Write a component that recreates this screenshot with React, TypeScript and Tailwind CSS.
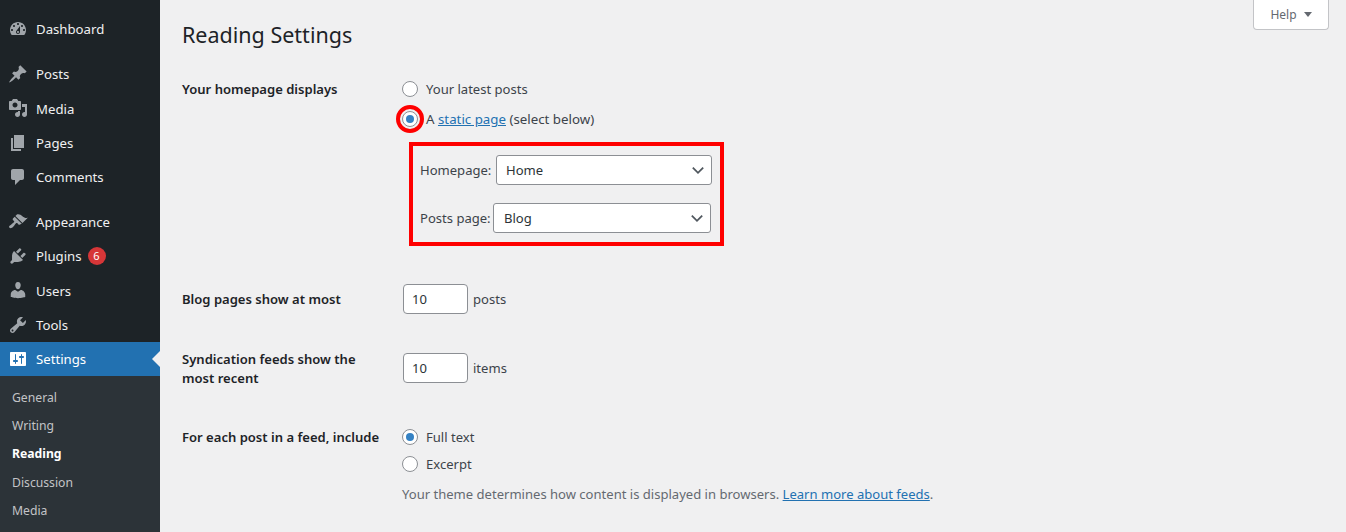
import React from 'react';

const paths = {
  dashboard: 'M3.76 16h12.48c1.1-1.37 1.76-3.11 1.76-5 0-4.42-3.58-8-8-8s-8 3.58-8 8c0 1.89.66 3.63 1.76 5zM10 4c.55 0 1 .45 1 1s-.45 1-1 1-1-.45-1-1 .45-1 1-1zM6 6c.55 0 1 .45 1 1s-.45 1-1 1-1-.45-1-1 .45-1 1-1zm8 0c.55 0 1 .45 1 1s-.45 1-1 1-1-.45-1-1 .45-1 1-1zm-5.37 5.55L12 7v6c0 1.1-.9 2-2 2s-2-.9-2-2c0-.57.24-1.08.63-1.45zM4 10c.55 0 1 .45 1 1s-.45 1-1 1-1-.45-1-1 .45-1 1-1zm12 0c.55 0 1 .45 1 1s-.45 1-1 1-1-.45-1-1 .45-1 1-1zm-5 3c0-.55-.45-1-1-1s-1 .45-1 1 .45 1 1 1 1-.45 1-1z',
  posts: 'M10.44 3.02l1.82-1.82 6.36 6.35-1.83 1.82c-1.05-.68-2.48-.57-3.41.36l-.75.75c-.92.93-1.04 2.35-.35 3.41l-1.83 1.82-2.41-2.41-2.8 2.79c-.42.42-3.38 2.71-3.8 2.29s1.86-3.39 2.28-3.81l2.79-2.79L4.1 9.36l1.83-1.82c1.05.69 2.48.57 3.4-.36l.75-.75c.93-.92 1.05-2.35.36-3.41z',
  media: 'M13 11V4c0-.55-.45-1-1-1h-1.67L9 1H5L3.67 3H2c-.55 0-1 .45-1 1v7c0 .55.45 1 1 1h10c.55 0 1-.45 1-1zM7 4.5c1.38 0 2.5 1.12 2.5 2.5S8.38 9.5 7 9.5 4.5 8.38 4.5 7 5.62 4.5 7 4.5zM14 6h5v10.5c0 1.38-1.12 2.5-2.5 2.5S14 17.88 14 16.5s1.12-2.5 2.5-2.5c.17 0 .34.02.5.05V9h-3V6zm-4 8.05V13h2v3.5c0 1.38-1.12 2.5-2.5 2.5S7 17.88 7 16.5 8.12 14 9.5 14c.17 0 .34.02.5.05z',
  pages: 'M6 15V2h10v13H6zm-1 1h8v2H3V5h2v11z',
  comments: 'M5 2h9c1.1 0 2 .9 2 2v7c0 1.1-.9 2-2 2h-2l-5 5v-5H5c-1.1 0-2-.9-2-2V4c0-1.1.9-2 2-2z',
  appearance: 'M14.48 11.06L7.41 3.99l1.5-1.5c.5-.56 2.3-.47 3.51.32 1.21.8 1.43 1.28 2.91 2.1 1.18.64 2.45 1.26 4.45.85zm-.71.71L6.7 4.7 4.93 6.47c-.39.39-.39 1.02 0 1.41l1.06 1.06c.39.39.39 1.03 0 1.42-.6.6-1.43 1.11-2.21 1.69-.35.26-.7.53-1.01.84C1.43 13.23.4 14.75 1.5 15.85c1.09 1.09 2.61.06 3.96-1.3.31-.31.58-.66.85-1.02.57-.78 1.08-1.61 1.69-2.21.39-.39 1.02-.39 1.41 0l1.06 1.06c.39.39 1.02.39 1.41 0z',
  plugins: 'M13.11 4.36L9.87 7.6 8 5.73l3.24-3.24c.35-.34 1.05-.2 1.56.32.52.51.66 1.21.31 1.55zm-8 1.77l.91-1.12 9.01 9.01-1.19.84c-.71.71-2.63 1.16-3.82 1.16H6.14L4.9 17.26c-.59.59-1.54.59-2.12 0-.59-.58-.59-1.53 0-2.12l1.24-1.24v-3.88c0-1.13.4-3.19 1.09-3.89zm7.26 3.97l3.24-3.24c.34-.35 1.04-.21 1.55.31.52.51.66 1.21.31 1.55l-3.24 3.25z',
  users: 'M10 9.25c-2.27 0-2.73-3.44-2.73-3.44C7 4.02 7.82 2 9.97 2c2.16 0 2.98 2.02 2.71 3.81 0 0-.41 3.44-2.68 3.44zm0 2.57L12.72 10c2.39 0 4.52 2.33 4.52 4.53v2.49s-3.65 1.13-7.24 1.13c-3.65 0-7.24-1.13-7.24-1.13v-2.49c0-2.25 1.94-4.48 4.47-4.48z',
  tools: 'M16.68 9.77c-1.34 1.34-3.3 1.67-4.95.99l-5.41 6.52c-.99.99-2.59.99-3.58 0s-.99-2.59 0-3.57l6.52-5.42c-.68-1.65-.35-3.61.99-4.95 1.28-1.28 3.12-1.62 4.72-1.06l-2.89 2.89 2.82 2.82 2.86-2.87c.53 1.58.18 3.39-1.08 4.65zM3.81 16.21c.4.39 1.04.39 1.43 0 .4-.4.4-1.04 0-1.43-.39-.4-1.03-.4-1.43 0-.39.39-.39 1.03 0 1.43z',
  settings: 'M18 16V4c0-.55-.45-1-1-1H3c-.55 0-1 .45-1 1v12c0 .55.45 1 1 1h14c.55 0 1-.45 1-1zM8 11h1c.55 0 1 .45 1 1s-.45 1-1 1H8v1.5c0 .28-.22.5-.5.5s-.5-.22-.5-.5V13H6c-.55 0-1-.45-1-1s.45-1 1-1h1V5.5c0-.28.22-.5.5-.5s.5.22.5.5V11zm5-2h-1c-.55 0-1-.45-1-1s.45-1 1-1h1V5.5c0-.28.22-.5.5-.5s.5.22.5.5V7h1c.55 0 1 .45 1 1s-.45 1-1 1h-1v5.5c0 .28-.22.5-.5.5s-.5-.22-.5-.5V9z',
};

type IconName = keyof typeof paths;

const MenuItem: React.FC<{ icon: IconName; label: string; children?: React.ReactNode }> = ({ icon, label, children }) => (
  <div className="flex items-center h-[34.2px] pl-[8px] text-[#f0f0f1]">
    <svg viewBox="0 0 20 20" className="w-5 h-5 mr-2 fill-[#a0a5aa]">
      <path d={paths[icon]} />
    </svg>
    <span className="pt-[2px]">{label}</span>
    {children}
  </div>
);

const Radio: React.FC<{ checked?: boolean }> = ({ checked }) => (
  <span className="flex items-center justify-center w-4 h-4 rounded-full border border-[#8c8f94] bg-white shrink-0">
    {checked && <span className="w-2 h-2 rounded-full bg-[#3582c4]" />}
  </span>
);

const Select: React.FC<{ value: string; className: string }> = ({ value, className }) => (
  <div className={`flex items-center justify-between h-[30px] pr-[5px] bg-white border border-[#8c8f94] rounded-[3px] text-[#2c3338] ${className}`}>
    <span className="pt-[2px]">{value}</span>
    <svg viewBox="0 0 20 20" className="w-4 h-4 fill-none stroke-[#50575e] stroke-[2.2]">
      <path d="M3.5 7l6.5 6.5L16.5 7" />
    </svg>
  </div>
);

const NumberBox: React.FC<{ value: string }> = ({ value }) => (
  <div className="flex items-center w-[65px] h-[30px] pl-[8px] pt-[2px] bg-white border border-[#8c8f94] rounded-[4px] text-[#2c3338]">{value}</div>
);

export default function App(): JSX.Element {
  return (
    <div className="flex h-[532px] overflow-hidden bg-[#f0f0f1] text-[#3c434a] text-[13.05px] font-['Noto_Sans',sans-serif]">
      <aside className="w-[160px] shrink-0 bg-[#1d2327] pt-[12px] text-[13.2px]">
        <MenuItem icon="dashboard" label="Dashboard" />
        <div className="h-[11px]" />
        <MenuItem icon="posts" label="Posts" />
        <MenuItem icon="media" label="Media" />
        <MenuItem icon="pages" label="Pages" />
        <MenuItem icon="comments" label="Comments" />
        <div className="h-[11px]" />
        <MenuItem icon="appearance" label="Appearance" />
        <MenuItem icon="plugins" label="Plugins">
          <span className="flex items-center justify-center w-[18px] h-[18px] ml-[6px] rounded-full bg-[#d63638] text-white text-[11px]">6</span>
        </MenuItem>
        <MenuItem icon="users" label="Users" />
        <MenuItem icon="tools" label="Tools" />
        <div className="relative flex items-center h-[34px] pl-[8px] bg-[#2271b1] text-white">
          <svg viewBox="0 0 20 20" className="w-5 h-5 mr-2 fill-white">
            <path d={paths.settings} />
          </svg>
          <span className="pt-[2px]">Settings</span>
          <span className="absolute right-0 top-[9px] border-y-[8px] border-r-[8px] border-y-transparent border-r-[#f0f0f1]" />
        </div>
        <div className="h-[158px] bg-[#2c3338] pt-[8px] pl-[12px] text-[12.2px] text-[#c3c4c7]">
          <div className="flex items-center h-[28.3px]">General</div>
          <div className="flex items-center h-[28.3px]">Writing</div>
          <div className="flex items-center h-[28.3px] font-bold text-white">Reading</div>
          <div className="flex items-center h-[28.3px]">Discussion</div>
          <div className="flex items-center h-[28.3px]">Media</div>
        </div>
      </aside>

      <main className="relative flex-1 pl-[22px]">
        <div className="absolute top-0 right-[17px] flex items-center justify-center w-[76px] h-[30px] bg-white border border-t-0 border-[#c3c4c7] rounded-b-[4px] text-[12px] text-[#646970]">
          Help
          <span className="ml-[7px] border-x-[4px] border-t-[5px] border-x-transparent border-t-[#646970]" />
        </div>

        <h1 className="pt-[20px] h-[69px] text-[21.5px] leading-[30px] text-[#1d2327]">Reading Settings</h1>

        <div className="flex h-[188px]">
          <div className="w-[220px] pt-[10px] leading-[20px] font-semibold text-[#1d2327]">Your homepage displays</div>
          <div>
            <div className="flex items-center h-[20px] mt-[10px]">
              <Radio />
              <span className="ml-2 pt-[2px]">Your latest posts</span>
            </div>
            <div className="relative flex items-center h-[20px] mt-[10px]">
              <Radio checked />
              <span className="absolute left-[-6px] top-[-4px] w-7 h-7 rounded-full border-[4px] border-[#ff0000]" />
              <span className="ml-2 pt-[2px] text-[13.3px]">A <a className="text-[#2271b1] underline">static page</a> (select below)</span>
            </div>
            <div className="w-[315px] h-[104px] mt-[13px] ml-[7px] border-[4px] border-[#ff0000] pl-[7px] pt-[9px]">
              <div className="flex items-center">
                <span className="w-[76px] pt-[2px]">Homepage:</span>
                <Select value="Home" className="w-[216px] pl-[9px]" />
              </div>
              <div className="flex items-center mt-[18px]">
                <span className="w-[73px] pt-[2px]">Posts page:</span>
                <Select value="Blog" className="w-[218px] pl-[10px]" />
              </div>
            </div>
          </div>
        </div>

        <div className="flex h-[69px] pt-[27px]">
          <div className="w-[221px] pt-[5px] leading-[20px] font-semibold text-[#1d2327]">Blog pages show at most</div>
          <div className="flex items-center h-[30px]">
            <NumberBox value="10" />
            <span className="ml-[5px] pt-[2px]">posts</span>
          </div>
        </div>

        <div className="flex h-[92px] pt-[23px]">
          <div className="w-[221px] pt-[1px] leading-[19px] font-semibold text-[#1d2327]">
            Syndication feeds show the<br />most recent
          </div>
          <div className="flex items-center h-[30px] mt-[4px]">
            <NumberBox value="10" />
            <span className="ml-[5px] pt-[2px]">items</span>
          </div>
        </div>

        <div className="flex pt-[5px]">
          <div className="w-[220px] pt-[4px] leading-[20px] font-semibold text-[#1d2327]">For each post in a feed, include</div>
          <div>
            <div className="flex items-center h-[20px] mt-[4px]">
              <Radio checked />
              <span className="ml-2 pt-[2px]">Full text</span>
            </div>
            <div className="flex items-center h-[20px] mt-[7px]">
              <Radio />
              <span className="ml-2 pt-[2px]">Excerpt</span>
            </div>
            <p className="mt-[10px] leading-[20px] text-[#646970]">
              Your theme determines how content is displayed in browsers. <a className="text-[#2271b1] underline">Learn more about feeds</a>.
            </p>
          </div>
        </div>
      </main>
    </div>
  );
}
